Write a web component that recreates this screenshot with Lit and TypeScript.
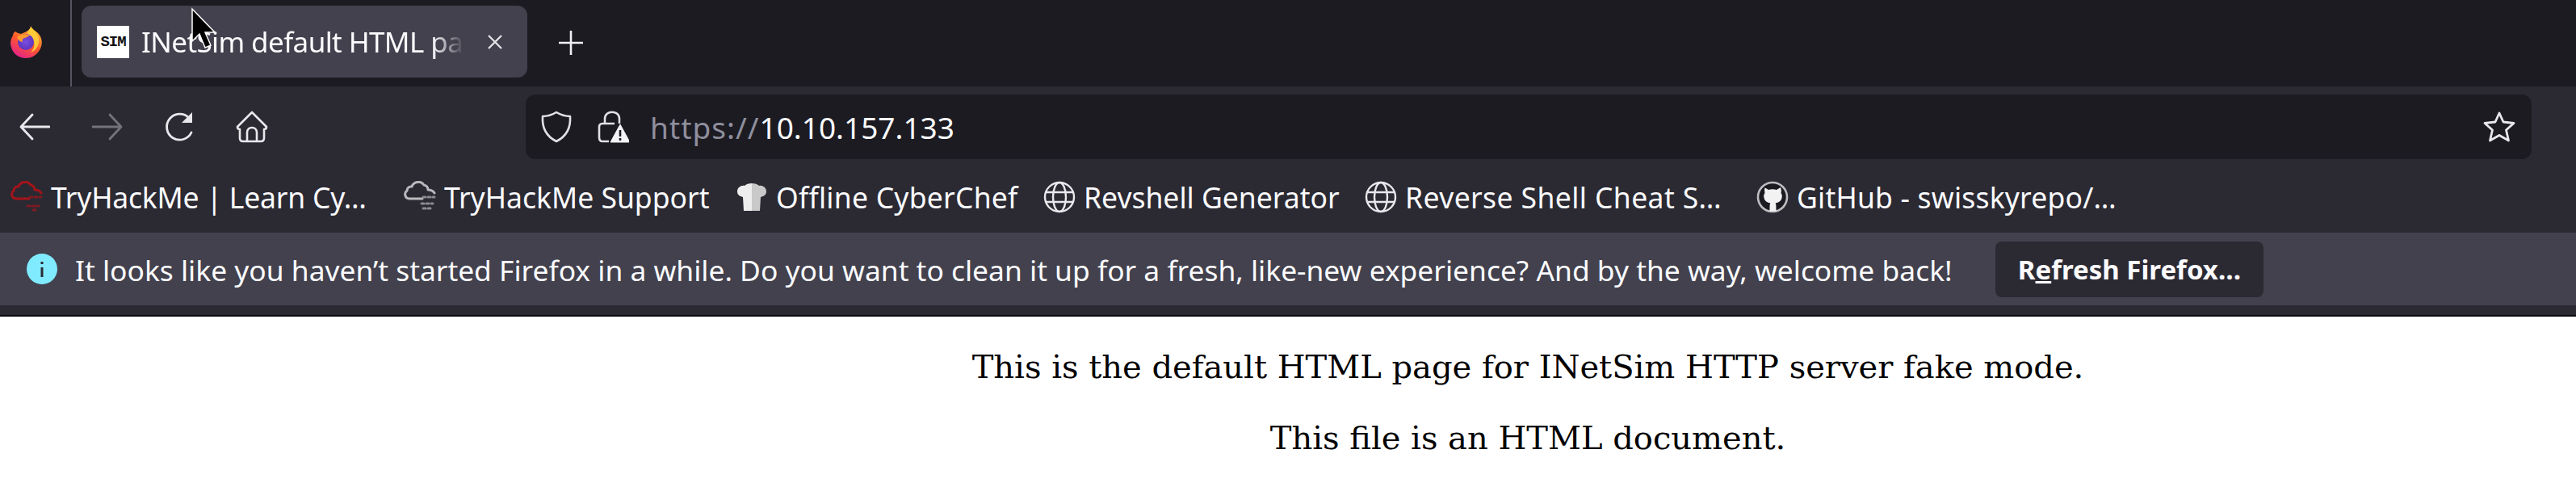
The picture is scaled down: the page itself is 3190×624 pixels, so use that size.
import { LitElement, html, css } from "lit";
import { customElement } from "lit/decorators.js";

const globe = html`<svg class="ic" viewBox="0 0 40 40" fill="none" stroke="#e8e8ec" stroke-width="2.4"><circle cx="20" cy="20" r="18"/><ellipse cx="20" cy="20" rx="8" ry="18"/><path d="M3 14h34M3 26h34"/></svg>`;
const cloud = (c: string, c2: string, extra = false) => html`<svg class="ic" viewBox="0 0 40 40" fill="none" stroke="${c}" stroke-width="3" stroke-linecap="round" stroke-linejoin="round">
  <path d="M23 22H7a5.500 5.500 0 0 1-3-10 a5 5 0 0 1 6-5 c2-6 11-8 15-2 a6 6 0 0 1 5 6 c3 0 6 1 8 4"/>
  <g stroke="${c2}" stroke-width="3" stroke-dasharray="3 3">
    <path d="M24 20h14"/>
    <path d="${extra ? "M22 28h14M24 34h10" : "M21 31h14M28 36h6"}"/>
  </g></svg>`;
const chef = html`<svg class="ic" viewBox="0 0 40 40"><defs><filter id="ch"><feGaussianBlur stdDeviation=".7"/></filter></defs><g filter="url(#ch)"><path d="M20 3c-4 0-7 1-9 3-4-1-9 2-9 7 0 4 3 6 7 7l1 17h10z" fill="#eeeeee"/><path d="M20 3c4 0 7 1 9 3 4-1 9 2 9 7 0 4-3 6-7 7l-1 17H20z" fill="#c9c9c9"/></g></svg>`;
const gh = html`<svg class="ic" viewBox="0 0 40 40"><circle cx="20" cy="20" r="18" fill="#1b1a20" stroke="#bdbdc2" stroke-width="2.6"/><path d="M10 8l5 3c3-1 7-1 10 0l5-3c1 3 1 5 .5 7 1.500 2 1.500 4 1 6-1 4-4 6-8 6.500 1 1 1 3 1 10h-8c0-7 0-9 1-10-4-.5-7-2.500-8-6.500-.5-2-.5-4 1-6-.5-2-.5-4 0-7z" fill="#f2f2f2"/></svg>`;

const bookmarks = [
  { w: 487, s: -0.2, t: "TryHackMe | Learn Cy…", i: cloud("#a3141a", "#7f1a20") },
  { w: 411, s: 0, t: "TryHackMe Support", i: cloud("#b9b9be", "#8a8a90", true) },
  { w: 381, s: 0.25, t: "Offline CyberChef", i: chef },
  { w: 398, s: 0, t: "Revshell Generator", i: globe },
  { w: 485, s: 0.4, t: "Reverse Shell Cheat S…", i: globe },
  { w: 460, s: 0.2, t: "GitHub - swisskyrepo/…", i: gh },
];

@customElement("app-root")
export class AppRoot extends LitElement {
  static styles = css`
    :host { display: block; width: 3190px; height: 624px; overflow: hidden; position: relative; background: #fff; font-family: "Noto Sans", sans-serif; }
    .ic { width: 40px; height: 40px; flex: none; display: block; }
    .tabs { height: 107px; background: #1c1b22; display: flex; align-items: stretch; }
    .ff { width: 89px; flex: none; display: flex; align-items: center; padding-left: 13px; box-sizing: border-box; border-right: 2px solid #55555f; padding-bottom: 4px; }
    .tab { margin: 7px 0 11px 12px; width: 552px; background: #42414d; border-radius: 12px; display: flex; align-items: center; padding-left: 19px; box-sizing: border-box; color: #fbfbfe; }
    .fav { width: 40px; height: 40px; flex: none; background: #fff; color: #111; font: 700 19px/40px "Liberation Mono", monospace; text-align: center; letter-spacing: -1px; }
    .title { margin-left: 15px; width: 400px; flex: none; overflow: hidden; white-space: nowrap; font-size: 35px; letter-spacing: -0.6px; line-height: 46px;
      -webkit-mask-image: linear-gradient(90deg, #000 90%, transparent 100%); mask-image: linear-gradient(90deg, #000 90%, transparent 100%); }
    .close { margin-left: 27px; width: 22px; height: 22px; flex: none; }
    .plus { width: 32px; height: 32px; margin: 37px 0 0 38px; flex: none; }
    .nav { height: 93px; background: #2b2a33; display: flex; align-items: flex-start; box-sizing: border-box; padding-top: 10px; }
    .navbtns { width: 651px; flex: none; display: flex; padding: 20px 0 0 22px; box-sizing: border-box; }
    .navbtns svg { width: 40px; height: 40px; flex: none; margin-right: 50px; }
    .urlbar { width: 2484px; height: 80px; background: #1c1b22; border-radius: 12px; display: flex; align-items: center; box-sizing: border-box; padding: 0 20px 0 18px; }
    .urlbar svg { width: 40px; height: 40px; flex: none; }
    .lock { margin-left: 30px; }
    .url { margin-left: 26px; flex: 1; font-size: 37px; color: #fbfbfe; white-space: nowrap; }
    .url span { color: #8f8f9d; letter-spacing: 1px; }
    .bm { height: 88px; background: #2b2a33; display: flex; align-items: center; padding-left: 13px; color: #fbfbfe; font-size: 35.500px; }
    .bmi { display: flex; align-items: center; gap: 10px; flex: none; white-space: nowrap; }
    .info { height: 90px; background: #42414d; display: flex; align-items: center; color: #fbfbfe; font-size: 35.400px; padding-left: 33px; white-space: nowrap; }
    .info .msg { margin-left: 22px; width: 2378px; flex: none; padding-top: 2px; }
    .btn { width: 332px; height: 69px; background: #2b2a33; border-radius: 8px; display: flex; align-items: center; justify-content: center; font-weight: 700; font-size: 33px; flex: none; }
    .sep { height: 12px; background: #2b2a33; }
    .line { height: 2px; background: #0c0c0d; }
    .page { padding-left: 594px; background: #fff; color: #000; font-family: "DejaVu Serif", serif; font-size: 40px; text-align: center; }
    .page p { margin: 0; line-height: 88px; }
    .page p:first-child { margin-top: 18px; }
    .cursor { position: absolute; left: 236px; top: 9px; width: 32px; height: 52px; }
  `;

  render() {
    return html`
      <div class="tabs">
        <div class="ff">
          <svg class="ic" viewBox="0 0 40 40">
            <defs>
              <linearGradient id="fg" x1=".8" y1=".1" x2=".3" y2="1"><stop offset="0" stop-color="#ffbd2e"/><stop offset=".5" stop-color="#ff5a2a"/><stop offset="1" stop-color="#e3218b"/></linearGradient>
              <radialGradient id="fp" cx=".5" cy=".5" r=".6"><stop offset="0" stop-color="#7a4fe0"/><stop offset="1" stop-color="#5a2fb8"/></radialGradient>
            </defs>
            <path d="M25 0c1 4 5 5 9 9 6 6 6 15 2 21-4 7-11 10-17 10C9 40 1 33 0 22c0-4 1-7 3-10 0-2 1-4 3-5 2 2 5 2 7 3 2-1 5-2 7-3 2-2 5-3 5-7z" fill="url(#fg)"/>
            <path d="M25 1c4 5 9 8 10 16 .5 8-4 14-10 16 5-5 6-11 2-17-2-3-4-3-6-5 0-4 3-6 4-10z" fill="#ffcf3a" opacity=".9"/>
            <circle cx="19" cy="20" r="10" fill="url(#fp)"/>
            <path d="M8 14c4-4 12-5 16-2l-6 3c-3 0-4 3-3 5-3 0-6-3-7-6z" fill="#ff9a2e"/>
          </svg>
        </div>
        <div class="tab">
          <div class="fav">SIM</div>
          <div class="title">INetSim default HTML page</div>
          <svg class="close" viewBox="0 0 22 22" stroke="#e8e8ec" stroke-width="2.200" fill="none"><path d="M3 3l16 16M19 3L3 19"/></svg>
        </div>
        <svg class="plus" viewBox="0 0 32 32" stroke="#f0f0f4" stroke-width="2.600" fill="none"><path d="M16 1v30M1 16h30"/></svg>
      </div>

      <div class="nav">
        <div class="navbtns">
          <svg viewBox="0 0 40 40" fill="none" stroke="#e8e8ec" stroke-width="2.800" stroke-linecap="round" stroke-linejoin="round"><path d="M39 20H5M18 5L4 20l14 15"/></svg>
          <svg viewBox="0 0 40 40" fill="none" stroke="#74737c" stroke-width="2.800" stroke-linecap="round" stroke-linejoin="round"><path d="M3 20h34M24 5l14 15-14 15"/></svg>
          <svg viewBox="0 0 40 40" fill="none" stroke="#e8e8ec" stroke-width="2.800" stroke-linecap="round"><path d="M35 27a16 16 0 1 1-3-18"/><path d="M36 2v13H23z" fill="#e8e8ec" stroke="none"/></svg>
          <svg viewBox="0 0 40 40" fill="none" stroke="#e8e8ec" stroke-width="2.600" stroke-linejoin="round"><path d="M20 2L2 20c0 2 1 3 3 3v11c0 3 2 4 4 4h22c2 0 4-1 4-4V23c2 0 3-1 3-3z"/><path d="M14 38V27c0-8 12-8 12 0v11"/></svg>
        </div>
        <div class="urlbar">
          <svg viewBox="0 0 40 40" fill="none" stroke="#e0e0e6" stroke-width="2.600" stroke-linejoin="round"><path d="M20 2c5 3 11 5 17 5 1 14-5 25-17 31C8 32 2 21 3 7c6 0 12-2 17-5z"/></svg>
          <svg class="lock" viewBox="0 0 40 40" fill="none" stroke="#e0e0e6" stroke-width="2.600" stroke-linejoin="round"><path d="M10 16V10c0-11 18-11 18 0v6"/><path d="M22 16H7c-3 0-4 2-4 4v13c0 3 1 5 4 5h8"/><path d="M29 17L17 39h24z" fill="#f4f4f6" stroke="#f4f4f6" stroke-width="1"/><path d="M29 24v8M29 34v3" stroke="#1c1b22" stroke-width="2.600"/></svg>
          <div class="url"><span>https://</span>10.10.157.133</div>
          <svg viewBox="0 0 40 40" fill="none" stroke="#e8e8ec" stroke-width="2.800" stroke-linejoin="round"><path d="M20 3l5 11 13 1.500-9.500 8.500 3 13L20 30.500 8.500 37l3-13L2 15.500 15 14z"/></svg>
        </div>
      </div>

      <div class="bm">
        ${bookmarks.map((b) => html`<div class="bmi" style="width:${b.w}px;letter-spacing:${b.s}px">${b.i}<span>${b.t}</span></div>`)}
      </div>

      <div class="info">
        <svg class="ic" style="width:38px;height:38px" viewBox="0 0 38 38"><circle cx="19" cy="19" r="19" fill="#80ebff"/><path d="M19 17v12M19 10v3" stroke="#2b2a33" stroke-width="3"/></svg>
        <div class="msg">It looks like you haven’t started Firefox in a while. Do you want to clean it up for a fresh, like-new experience? And by the way, welcome back!</div>
        <div class="btn"><span>R<u>e</u>fresh Firefox…</span></div>
      </div>
      <div class="sep"></div>
      <div class="line"></div>

      <div class="page">
        <p>This is the default HTML page for INetSim HTTP server fake mode.</p>
        <p>This file is an HTML document.</p>
      </div>

      <svg class="cursor" viewBox="0 0 32 52"><path d="M2 2v40l9-9 7 17 7-3-7-16h12z" fill="#000" stroke="#fff" stroke-width="1.500"/></svg>
    `;
  }
}
